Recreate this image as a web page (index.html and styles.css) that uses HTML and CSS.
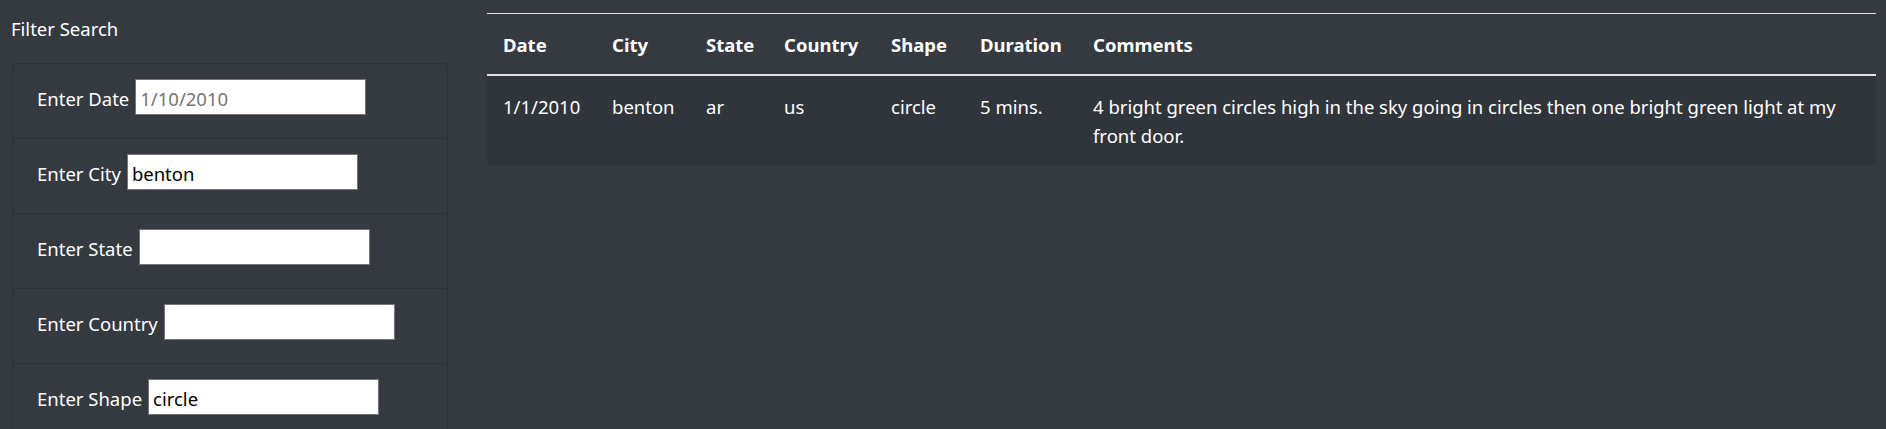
FILE: index.html
```html
<!DOCTYPE html>
<html lang="en">
<head>
<meta charset="utf-8">
<title>UFO Sightings</title>
<link rel="stylesheet" href="styles.css">
</head>
<body>
<div class="page">
  <aside class="filters">
    <h2 class="filters-title">Filter Search</h2>
    <ul class="filter-list">
      <li class="filter-item"><label for="date">Enter Date</label><input id="date" class="filter-input" type="text" placeholder="1/10/2010"></li>
      <li class="filter-item"><label for="city">Enter City</label><input id="city" class="filter-input" type="text" value="benton"></li>
      <li class="filter-item"><label for="state">Enter State</label><input id="state" class="filter-input" type="text"></li>
      <li class="filter-item"><label for="country">Enter Country</label><input id="country" class="filter-input" type="text"></li>
      <li class="filter-item"><label for="shape">Enter Shape</label><input id="shape" class="filter-input" type="text" value="circle"></li>
    </ul>
  </aside>
  <main class="results">
    <table class="ufo-table">
      <colgroup>
        <col class="c-date"><col class="c-city"><col class="c-state"><col class="c-country"><col class="c-shape"><col class="c-duration"><col>
      </colgroup>
      <thead>
        <tr><th>Date</th><th>City</th><th>State</th><th>Country</th><th>Shape</th><th>Duration</th><th>Comments</th></tr>
      </thead>
      <tbody>
        <tr><td>1/1/2010</td><td>benton</td><td>ar</td><td>us</td><td>circle</td><td>5 mins.</td><td>4 bright green circles high in the sky going in circles then one bright green light at my front door.</td></tr>
      </tbody>
    </table>
  </main>
</div>
</body>
</html>
```

FILE: styles.css
```css
html, body {
  margin: 0;
  padding: 0;
  background: #343a40;
  color: #ffffff;
  font-family: "Noto Sans", "Open Sans", sans-serif;
  font-size: 18.5px;
  line-height: 28.8px;
}

.page {
  display: flex;
  gap: 39px;
  padding: 13px 10px 0 12px;
}

.filters {
  width: 436px;
  flex: none;
}

.filters-title {
  margin: 2px 0 19px -1px;
  font-size: 18.5px;
  font-weight: 400;
  line-height: 28.8px;
}

.filter-list {
  list-style: none;
  margin: 0;
  padding: 0;
  border: 1px solid #2c3136;
  border-radius: 5px;
}

.filter-item {
  display: flex;
  align-items: baseline;
  gap: 6px;
  padding: 15px 24px 23px;
}

.filter-item + .filter-item {
  border-top: 1px solid #2c3136;
}

.filter-input {
  box-sizing: border-box;
  width: 231px;
  height: 36px;
  margin: 0;
  padding: 3px 4px 0;
  border: 1px solid #767676;
  background: #ffffff;
  color: #000000;
  font-family: "Noto Sans", "Open Sans", sans-serif;
  font-size: 18.5px;
}

.filter-input::placeholder {
  color: #757575;
}

.results {
  flex: 1;
  min-width: 0;
}

.ufo-table {
  width: 100%;
  table-layout: fixed;
  border-collapse: collapse;
}

.c-date { width: 109px; }
.c-city { width: 94px; }
.c-state { width: 78px; }
.c-country { width: 107px; }
.c-shape { width: 89px; }
.c-duration { width: 113px; }

.ufo-table th {
  text-align: left;
  font-weight: 700;
  padding: 17.4px 14.4px 13.8px 16px;
  border-top: 1px solid #dee2e6;
  border-bottom: 2px solid #dee2e6;
  vertical-align: bottom;
}

.ufo-table td {
  padding: 17.2px 14.4px 14.2px 16px;
  background: #30353b;
  vertical-align: top;
}
```
